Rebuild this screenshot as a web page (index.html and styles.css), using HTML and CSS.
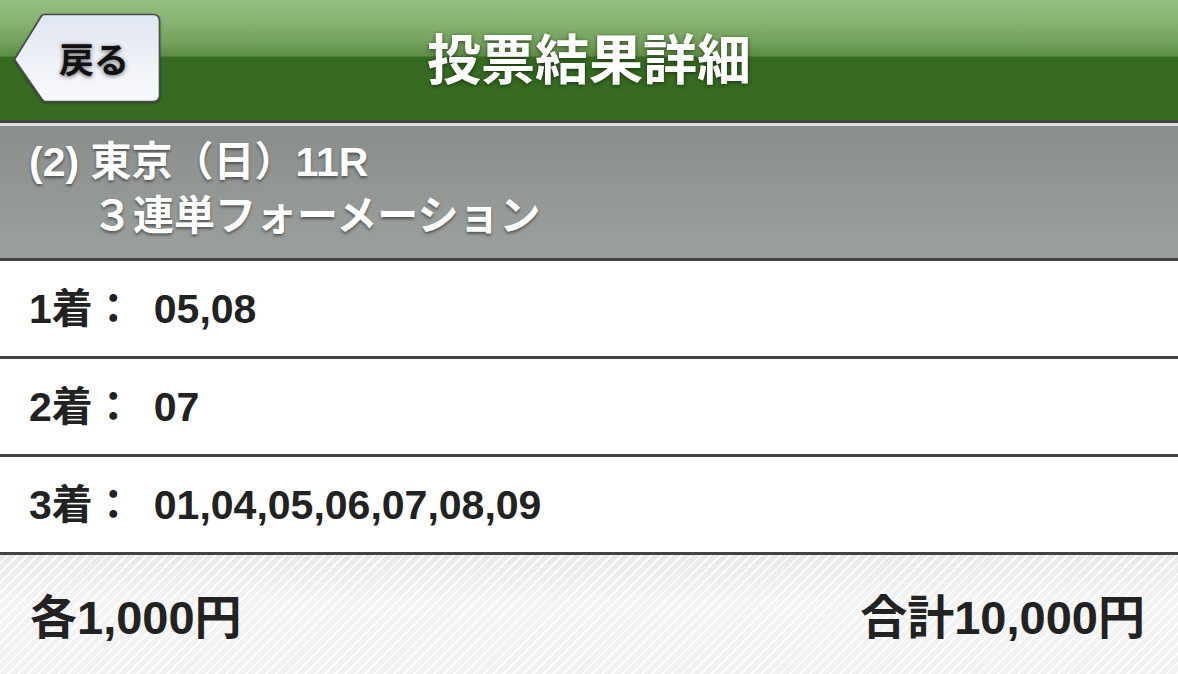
FILE: index.html
```html
<!DOCTYPE html>
<html lang="ja">
<head>
<meta charset="utf-8">
<title>投票結果詳細</title>
<link rel="stylesheet" href="styles.css">
</head>
<body>
<div class="page">
  <header class="topbar">
    <div class="topbar-left">
      <a class="back-btn" href="#">
        <svg class="back-shape" width="150" height="92" viewBox="0 0 150 92" aria-hidden="true">
          <defs>
            <linearGradient id="btnGrad" x1="0" y1="0" x2="0" y2="1">
              <stop offset="0" stop-color="#e0e6ef"/>
              <stop offset="1" stop-color="#f9fafd"/>
            </linearGradient>
          </defs>
          <path d="M2.5 46.5 L29.5 3 Q30.5 1.5 32.5 1.5 L141 1.5 Q147.5 1.5 147.5 8 L147.5 82 Q147.5 88.5 141 88.5 L33.5 88.5 Q31.5 88.5 30.5 87 Z" fill="url(#btnGrad)" stroke="#4b4b4b" stroke-width="1.6"/>
        </svg>
        <span class="back-label">戻る</span>
      </a>
    </div>
    <h1 class="title">投票結果詳細</h1>
    <div class="topbar-right"></div>
  </header>

  <section class="race-info">
    <div class="race-line">(2) 東京（日）11R</div>
    <div class="race-line bet-type">３連単フォーメーション</div>
  </section>

  <ul class="picks">
    <li class="pick-row"><div class="pick-text"><span class="pick-label">1着：</span><span class="pick-value">05,08</span></div></li>
    <li class="pick-row"><div class="pick-text"><span class="pick-label">2着：</span><span class="pick-value">07</span></div></li>
    <li class="pick-row"><div class="pick-text"><span class="pick-label">3着：</span><span class="pick-value">01,04,05,06,07,08,09</span></div></li>
  </ul>

  <footer class="summary">
    <span class="summary-item">各1,000円</span>
    <span class="summary-item">合計10,000円</span>
  </footer>
</div>
</body>
</html>
```

FILE: styles.css
```css
* {
  box-sizing: border-box;
}

html, body {
  margin: 0;
  padding: 0;
  background: #ffffff;
}

body {
  font-family: "Liberation Sans", "Noto Sans CJK JP", sans-serif;
  font-weight: bold;
  width: 1178px;
  height: 674px;
  overflow: hidden;
}

.page {
  display: flex;
  flex-direction: column;
  height: 674px;
}

/* ---------- top bar ---------- */
.topbar {
  height: 126px;
  display: grid;
  grid-template-columns: 1fr auto 1fr;
  align-items: center;
  background:
    linear-gradient(to bottom,
      #93be80 0px,
      #88b574 20px,
      #709f58 45px,
      #5c8d43 56px,
      #386f24 57px,
      #366b21 60px,
      #366b21 120px,
      #444444 120px,
      #444444 123px,
      #dde1dd 123px,
      #dde1dd 126px);
  padding-bottom: 6px;
}

.topbar-left {
  display: flex;
  align-items: center;
  padding-left: 12px;
}

.back-btn {
  display: grid;
  width: 150px;
  height: 92px;
  text-decoration: none;
  margin-top: -3px;
}

.back-shape {
  grid-area: 1 / 1;
  filter: drop-shadow(0 1px 1px rgba(0, 0, 0, 0.35));
}

.back-label {
  grid-area: 1 / 1;
  position: relative;
  z-index: 1;
  align-self: center;
  justify-self: center;
  padding-left: 14px;
  font-family: "Noto Sans CJK JP", sans-serif;
  font-weight: 700;
  font-size: 35px;
  line-height: 1;
  color: #111111;
  text-shadow: 0 1px 4px rgba(0, 0, 0, 0.6);
  margin-top: -2px;
}

.title {
  margin: 0;
  font-family: "Noto Sans CJK JP", sans-serif;
  font-weight: 700;
  font-size: 54px;
  line-height: 1;
  color: #ffffff;
  text-shadow: 0 1px 4px rgba(0, 0, 0, 0.55);
  margin-top: -7px;
}

/* ---------- race info ---------- */
.race-info {
  height: 135px;
  background: linear-gradient(to bottom, #898e8a 0%, #9ca19d 100%);
  border-bottom: 3px solid #434343;
  padding: 9px 0 0 29px;
  color: #ffffff;
  font-size: 41px;
  text-shadow: 0 2px 3px rgba(0, 0, 0, 0.45);
}

.race-line {
  line-height: 54px;
  white-space: nowrap;
}

.bet-type {
  padding-left: 63px;
}

/* ---------- picks ---------- */
.picks {
  list-style: none;
  margin: 0;
  padding: 0;
}

.pick-row {
  height: 98px;
  border-bottom: 3px solid #434343;
  display: flex;
  align-items: center;
  padding-left: 29px;
  padding-top: 2px;
  font-size: 41px;
  color: #222222;
}

.pick-text {
  line-height: 1.2;
  white-space: nowrap;
}

.pick-value {
  margin-left: 20px;
}

/* ---------- summary ---------- */
.summary {
  flex: 1;
  display: flex;
  justify-content: space-between;
  align-items: center;
  padding: 0 33px 2px 30px;
  font-size: 47px;
  color: #222222;
  background:
    repeating-linear-gradient(135deg,
      rgba(255, 255, 255, 0) 0px,
      rgba(255, 255, 255, 0) 5px,
      rgba(255, 255, 255, 0.9) 5px,
      rgba(255, 255, 255, 0.9) 7px),
    linear-gradient(to bottom, #e9e9e9 0%, #f3f3f3 40%, #f1f1f1 100%);
}

.summary-item {
  white-space: nowrap;
}
```
